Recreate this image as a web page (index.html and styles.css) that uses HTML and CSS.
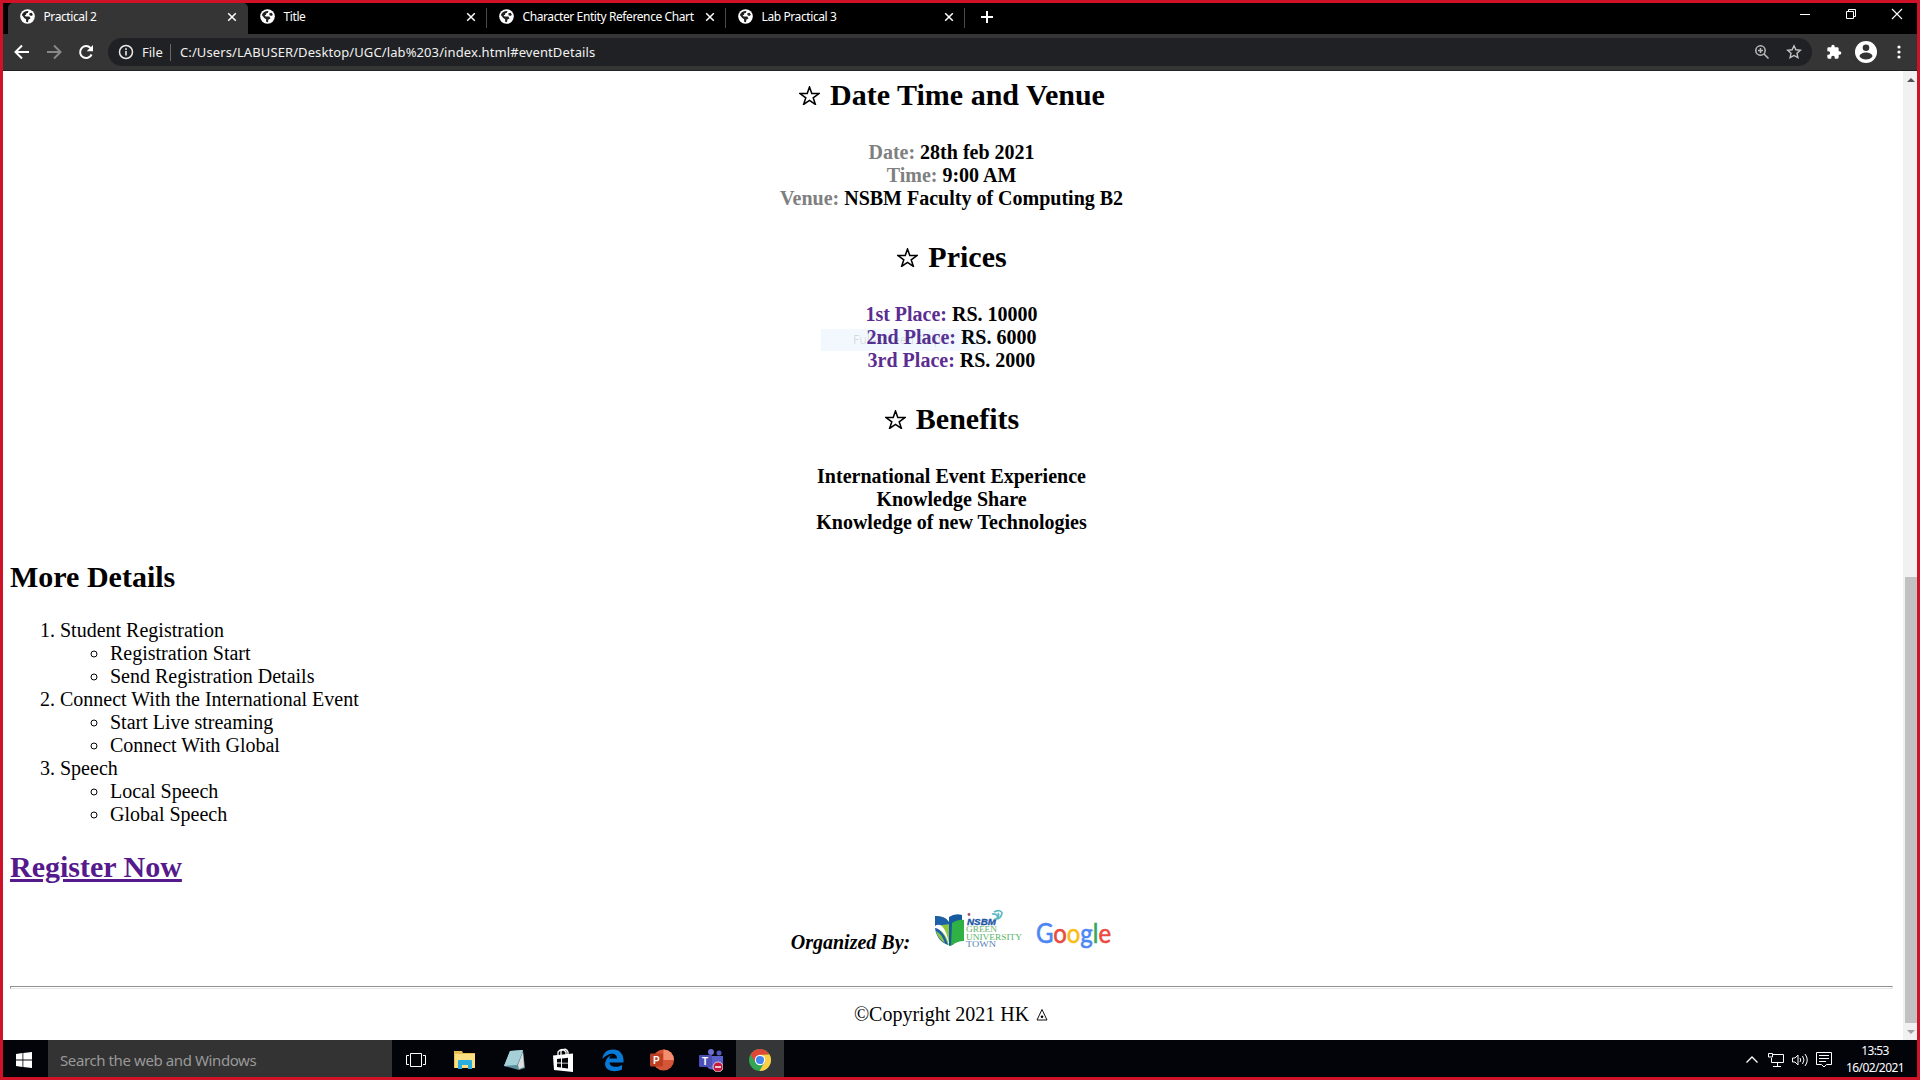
FILE: index.html
```html
<!DOCTYPE html>
<html lang="en">
<head>
<meta charset="utf-8">
<title>Practical 2</title>
<link rel="stylesheet" href="styles.css">
</head>
<body>
<svg width="0" height="0" class="defs" aria-hidden="true">
  <symbol id="globe" viewBox="0 0 16 16"><circle cx="8" cy="8" r="7.8" fill="#fff"/><path d="M2 6.500C3 3.500 6 1.800 9 2.200L8.500 4 6.500 4.800V6.500H5L6 8h4l1.200 2-2.200 1.300L8.500 14C7.500 14 7 13.800 6.500 13.500V11L4.500 9.500z" fill="#222"/><path d="M10 4.500l2.500-.5 1.300 2.500-2 1-1.800-1z" fill="#222"/></symbol>
  <symbol id="x" viewBox="0 0 10 10"><path d="M1.2 1.2l7.6 7.6M8.8 1.2L1.2 8.8" stroke="#fff" stroke-width="1.5"/></symbol>
</svg>
<div class="screen">
  <header class="tabs">
    <div class="tab active"><svg class="fav"><use href="#globe"/></svg><span>Practical 2</span><svg class="close"><use href="#x"/></svg></div>
    <div class="tab"><svg class="fav"><use href="#globe"/></svg><span>Title</span><svg class="close"><use href="#x"/></svg></div>
    <div class="tab"><svg class="fav"><use href="#globe"/></svg><span>Character Entity Reference Chart</span><svg class="close"><use href="#x"/></svg></div>
    <div class="tab"><svg class="fav"><use href="#globe"/></svg><span>Lab Practical 3</span><svg class="close"><use href="#x"/></svg></div>
    <svg class="plus" viewBox="0 0 14 14"><path d="M7 1v12M1 7h12" stroke="#fff" stroke-width="2"/></svg>
    <div class="window-buttons">
      <svg viewBox="0 0 12 12"><path d="M1 6.500h10" stroke="#fff"/></svg>
      <svg viewBox="0 0 12 12"><path d="M1.500 3.500h7v7h-7zM3.500 3.500v-2h7v7h-2" fill="none" stroke="#fff"/></svg>
      <svg viewBox="0 0 12 12"><path d="M1 1l10 10M11 1L1 11" stroke="#fff" stroke-width="1.1"/></svg>
    </div>
  </header>
  <div class="toolbar">
    <div class="nav">
      <svg viewBox="0 0 16 16"><path d="M15 8H2M8 1.5L1.5 8 8 14.5" fill="none" stroke="#fff" stroke-width="2"/></svg>
      <svg viewBox="0 0 16 16"><path d="M1 8h13M8 1.5L14.500 8 8 14.500" fill="none" stroke="#888" stroke-width="2"/></svg>
      <svg viewBox="0 0 16 16"><path d="M13.600 10.500A6 6 0 1 1 12.500 4" fill="none" stroke="#fff" stroke-width="2"/><path d="M15 1v6.300H8.700z" fill="#fff"/></svg>
    </div>
    <div class="address">
      <svg class="info" viewBox="0 0 16 16"><circle cx="8" cy="8" r="6.500" fill="none" stroke="#e8eaed" stroke-width="1.500"/><path d="M8 7v4.500M8 4.300v1.700" stroke="#e8eaed" stroke-width="1.600"/></svg>
      <span class="scheme">File</span><span class="url">C:/Users/LABUSER/Desktop/UGC/lab%203/index.html#eventDetails</span>
      <svg class="zoom" viewBox="0 0 16 16"><circle cx="6.500" cy="6.500" r="4.700" fill="none" stroke="#bbb" stroke-width="1.500"/><path d="M10 10l4.500 4.500M4 6.500h5M6.500 4v5" stroke="#bbb" stroke-width="1.500"/></svg>
      <svg class="star" viewBox="0 0 16 16"><path d="M8 1.800l1.900 4 4.400.5-3.300 3 .9 4.400L8 11.500l-3.900 2.200.9-4.400-3.300-3 4.400-.5z" fill="none" stroke="#c4c4c4" stroke-width="1.400"/></svg>
    </div>
    <svg class="puzzle" viewBox="0 0 24 24"><path fill="#fff" d="M20.500 11H19V7c0-1.100-.9-2-2-2h-4V3.500a2.500 2.500 0 0 0-5 0V5H4a2 2 0 0 0-2 2v3.800h1.500a2.700 2.700 0 0 1 0 5.400H2V20c0 1.100.9 2 2 2h3.800v-1.500a2.700 2.700 0 0 1 5.400 0V22H17a2 2 0 0 0 2-2v-4h1.500a2.500 2.500 0 0 0 0-5z"/></svg>
    <svg class="avatar" viewBox="0 0 22 22"><circle cx="11" cy="11" r="11" fill="#fff"/><circle cx="11" cy="6.700" r="3.300" fill="#333"/><path d="M4.500 15.200c1-5 12-5 13 0-2.600 4.300-10.400 4.300-13 0z" fill="#333"/></svg>
    <svg class="dots" viewBox="0 0 4 14"><circle cx="2" cy="2" r="1.600" fill="#fff"/><circle cx="2" cy="7" r="1.600" fill="#fff"/><circle cx="2" cy="12" r="1.600" fill="#fff"/></svg>
  </div>
  <div class="viewport">
    <main class="page">
      <section class="event">
        <h2><svg class="h-star" viewBox="0 0 22 20"><path d="M11 1l2.400 7H21l-6.100 4.400 2.300 7L11 15.100l-6.200 4.300 2.300-7L1 8h7.600z"/></svg>Date Time and Venue</h2>
        <p><i class="label">Date:</i> 28th feb 2021<br><i class="label">Time:</i> 9:00 AM<br><i class="label">Venue:</i> NSBM Faculty of Computing B2</p>
        <h2><svg class="h-star" viewBox="0 0 22 20"><path d="M11 1l2.400 7H21l-6.100 4.400 2.300 7L11 15.100l-6.200 4.300 2.300-7L1 8h7.600z"/></svg>Prices</h2>
        <p class="prices"><i class="place">1st Place:</i> RS. 10000<br><i class="place">2nd Place:</i> RS. 6000<br><i class="place">3rd Place:</i> RS. 2000<span class="ghost">Full-screen Snip</span></p>
        <h2><svg class="h-star" viewBox="0 0 22 20"><path d="M11 1l2.400 7H21l-6.100 4.400 2.300 7L11 15.100l-6.200 4.300 2.300-7L1 8h7.600z"/></svg>Benefits</h2>
        <p class="benefits">International Event Experience<br>Knowledge Share<br>Knowledge of new Technologies</p>
      </section>
      <h2 class="more">More Details</h2>
      <ol>
        <li>Student Registration<ul><li>Registration Start</li><li>Send Registration Details</li></ul></li>
        <li>Connect With the International Event<ul><li>Start Live streaming</li><li>Connect With Global</li></ul></li>
        <li>Speech<ul><li>Local Speech</li><li>Global Speech</li></ul></li>
      </ol>
      <h2 class="register"><a href="#register">Register Now</a></h2>
      <div class="organizers">
        <b>Organized By:</b>
        <svg class="nsbm" viewBox="0 0 88 40">
          <path d="M0 7c8 0 13 3 16 9v21C7 34 1 26 0 7z" fill="#8dc63f"/>
          <path d="M0 7c8 0 12 2 15 8L0 17z" fill="#1d60a8"/>
          <path d="M0 17c5-4 11 1 14 17v2C11 25 6 20 0 20z" fill="#fff"/>
          <path d="M0 19c6 1 10 7 13 17C5 33 1 27 0 19z" fill="#1d60a8"/>
          <path d="M1 22c4 2 7 6 9 12-5-3-8-7-9-12z" fill="#8dc63f"/>
          <path d="M14 8q6-4 13-2v7l-8 3v19l-5 2z" fill="#165a9f"/>
          <path d="M17 14q7-4 12-3v21q-7 0-13 5z" fill="#2fb146"/>
          <text x="32" y="15.500" textLength="29" lengthAdjust="spacingAndGlyphs" font-size="9" font-weight="700" font-style="italic" fill="#1c56a4" stroke="#1c56a4" stroke-width=".3">NSBM</text>
          <g font-family="Liberation Serif, serif" font-size="9"><text x="31" y="23" textLength="31" lengthAdjust="spacingAndGlyphs" fill="#68b36c">GREEN</text><text x="31" y="30.500" textLength="56" lengthAdjust="spacingAndGlyphs" fill="#54b466">UNIVERSITY</text><text x="31" y="38" textLength="30" lengthAdjust="spacingAndGlyphs" fill="#5582b4">TOWN</text></g>
          <circle cx="34" cy="5.500" r="1.400" fill="#a2506a"/><path d="M59 3q7-3 8 1-1 6-6 6 4-3 2-6M57 5q5-1 6 4" fill="none" stroke="#5fb9c2" stroke-width="1.700"/>
        </svg>
        <svg class="google" viewBox="0 0 76 32"><text x="0" y="20.500" textLength="75" lengthAdjust="spacingAndGlyphs"><tspan fill="#4b87f3" stroke="#4b87f3">G</tspan><tspan fill="#ea4a3d" stroke="#ea4a3d">o</tspan><tspan fill="#f8bd16" stroke="#f8bd16">o</tspan><tspan fill="#4b87f3" stroke="#4b87f3">g</tspan><tspan fill="#38a757" stroke="#38a757">l</tspan><tspan fill="#ea4a3d" stroke="#ea4a3d">e</tspan></text></svg>
      </div>
      <hr>
      <footer>©Copyright 2021 HK <svg class="tri" viewBox="0 0 12 13"><path d="M6 1.500L11 12H1z" fill="none" stroke="#111"/><circle cx="6" cy="8.700" r="1.300"/></svg></footer>
    </main>
    <aside class="scrollbar"><i class="up"></i><i class="thumb"></i><i class="down"></i></aside>
  </div>
  <nav class="taskbar">
    <div class="start"><svg viewBox="0 0 16 16"><path fill="#fff" d="M0 2l6.500-.9v6.500H0zM7.300 1L16 0v7.600H7.300zM0 8.400h6.500v6.500L0 14zM7.300 8.400H16V16l-8.700-1z"/></svg></div>
    <div class="search">Search the web and Windows</div>
    <div class="apps">
      <div><svg viewBox="0 0 24 24"><path d="M6.500 5.500h11v13h-11zM5 7.500H2.500v9H5M19 7.500h2.500v9H19" fill="none" stroke="#fff"/></svg></div>
      <div><svg viewBox="0 0 24 24"><path d="M1 3h8l1 2h12v15H1z" fill="#e9bd54"/><path d="M2 6h20v14H2z" fill="#fbdf83"/><path d="M5 21v-8q0-1 1-1h12q1 0 1 1v8h-4v-4H9v4z" fill="#28afe0"/></svg></div>
      <div><svg viewBox="0 0 24 24"><path d="M8 3l13-1-3 18-16-2z" fill="#83b9c5"/><path d="M8 3l13-1-5 15-14 1z" fill="#a5d0d8"/><path d="M21 3l2 17-6 2-15-4 13-1z" fill="#5c8d9a"/><path d="M21 4l1 15-5 2-1-4z" fill="#ddd"/></svg></div>
      <div><svg viewBox="0 0 24 24"><path d="M7 8V4q4-5 8 0v3M10 7V3q5-4 7 1v3" fill="none" stroke="#fff" stroke-width="1.300"/><path d="M2 7.500l20-2V24L3 22z" fill="#fff"/><path d="M6 11l4-.4v4H6zM11 10.500l6-.7v4.900h-6zM6 15.500h4v4L6 19zM11 15.500h6v5l-6-.7z" fill="#030409"/></svg></div>
      <div><svg viewBox="0 0 24 24"><path fill="#0879d5" d="M1.500 11C2 4.500 6.500 1.500 12 1.500c7 0 10.500 5 10.500 10.500v2.500h-14c.3 5 8 5.500 12.500 2.500v4.500C11 26 2 21 4.500 13.500 5.500 10 8 8 11 7 8.500 8.500 8.500 9.500 8.300 10.500H16c0-7-9.500-6-14.500.5z"/></svg></div>
      <div><svg viewBox="0 0 24 24"><circle cx="13.500" cy="12" r="10.500" fill="#d45538"/><path d="M13.500 1.500A10.500 10.500 0 0 1 24 12H13.500z" fill="#f48e6e"/><rect y="5.500" width="13" height="13" rx="1" fill="#bd3e20"/><text x="3" y="15.500" font-size="10" font-weight="700" fill="#fff">P</text></svg></div>
      <div><svg viewBox="0 0 24 24"><circle cx="12" cy="4" r="3" fill="#6b70cf"/><circle cx="20" cy="5" r="2.500" fill="#5359c0"/><path d="M6 8h18v8q-2 6-8 5-6 2-9-4z" fill="#5b60ca"/><rect y="7" width="13" height="12" rx="1" fill="#4c50b6"/><text x="3" y="16.500" font-size="10" font-weight="700" fill="#fff">T</text><circle cx="19" cy="19" r="5" fill="#c31941" stroke="#eee" stroke-width=".8"/><path d="M16 19h6" stroke="#fff" stroke-width="1.500"/></svg></div>
      <div class="current"><svg viewBox="0 0 24 24"><circle cx="12" cy="12" r="11" fill="#32a653"/><path d="M2.500 6.500A11 11 0 0 1 21.500 6.500L12 7 7.500 14.500z" fill="#df4738"/><path d="M21.500 6.500A11 11 0 0 1 11.500 23L16.500 14.500 13 6.800z" fill="#fccf45"/><circle cx="12" cy="12" r="5.200" fill="#fff"/><circle cx="12" cy="12" r="4.100" fill="#4384ed"/></svg></div>
    </div>
    <div class="tray">
      <svg viewBox="0 0 16 16"><path d="M2.500 10.500L8 5l5.500 5.500" fill="none" stroke="#fff" stroke-width="1.300"/></svg>
      <svg viewBox="0 0 16 16"><path d="M5 2.500h10.500v8H3.500V6M9.500 10.500v4M5 14.500h8M.5 1.500h4v3.500h-4z" fill="none" stroke="#fff"/></svg>
      <svg viewBox="0 0 16 16"><path d="M.5 6h2.500l3-3v10l-3-3H.5zM8 6q1.500 2 0 4M10.500 4q3 4 0 8M13 2q4.500 6 0 12" fill="none" stroke="#fff"/></svg>
      <svg viewBox="0 0 16 16"><path d="M.5.5h15v12h-5L8 15l-2.500-2.500h-5zM3 3.500h10M3 6.500h10M3 9.500h7" fill="none" stroke="#fff"/></svg>
      <div class="clock"><span>13:53</span><span>16/02/2021</span></div>
    </div>
  </nav>
</div>
</body>
</html>
```
FILE: styles.css
```css
* { box-sizing: border-box; }
body { margin: 0; overflow: hidden; font-family: "Noto Sans", "Open Sans", sans-serif; }
.defs { display: block; position: absolute; }
svg { display: block; flex: none; }
.screen { width: 1920px; height: 1080px; border: 3px solid #cf1228; display: flex; flex-direction: column; background: #fff; }

.tabs { height: 31px; background: #000; display: flex; align-items: flex-start; padding-left: 5px; color: #fff; font-size: 12px; }
.tab { width: 239px; height: 31px; padding: 0 11px 4px 12px; display: flex; align-items: center; gap: 8.5px; position: relative; white-space: nowrap; letter-spacing: -0.4px; }
.tab.active { width: 240px; background: #353535; border-radius: 5px 5px 0 0; }
.tab:not(.active)::after { content: ""; position: absolute; right: 0; top: 5px; width: 1px; height: 20px; background: #4a4a4a; }
.fav { width: 15px; height: 15px; }
.close { width: 10px; height: 10px; margin-left: auto; }
.plus { width: 14px; height: 14px; margin: 7px 0 0 15px; }
.window-buttons { margin: 5px 14px 0 auto; display: flex; gap: 34px; }
.window-buttons svg { width: 12px; height: 12px; }

.toolbar { height: 37px; background: #353535; border-bottom: 1px solid #202124; display: flex; align-items: center; }
.nav { width: 105px; padding-left: 11px; display: flex; gap: 16px; }
.nav svg { width: 16px; height: 16px; }
.address { width: 1704px; height: 28px; background: #202124; border-radius: 14px; display: flex; align-items: center; padding: 0 10px; color: #f1f1f1; font-size: 13px; white-space: nowrap; }
.info { width: 16px; height: 16px; margin-right: 8px; }
.scheme { width: 29px; border-right: 1px solid #686868; line-height: 17px; }
.url { padding-left: 9px; letter-spacing: 0.1px; }
.zoom { width: 16px; height: 16px; margin-left: auto; margin-right: 16px; }
.star { width: 16px; height: 16px; }
.puzzle { width: 16px; height: 16px; margin-left: 14px; }
.avatar { width: 22px; height: 22px; margin-left: 13px; }
.dots { width: 4px; height: 14px; margin-left: 20px; }

.viewport { height: 969px; display: flex; }
.page { width: 1900px; padding: 7px 10px 0 7px; font: 20px/23px "Liberation Serif", serif; color: #000; overflow: hidden; }
.page h2 { font-size: 30px; line-height: 34px; height: 34px; margin: 0; }
.event { text-align: center; font-weight: bold; height: 482px; }
.event h2 { display: flex; justify-content: center; align-items: center; gap: 10px; padding-left: 1px; }
.h-star { width: 21px; height: 19px; fill: none; stroke: #000; stroke-width: 1.6; }
.event p { margin: 29px 0 30px; height: 69px; }
.label, .place { font-style: normal; }
.label { color: #808080; }
.place { color: #5c2d91; }
.prices { position: relative; }
.ghost { position: absolute; left: 811px; top: 26px; width: 174px; height: 22px; padding-left: 32px; background: linear-gradient(90deg, rgba(0,120,215,.05), rgba(0,120,215,.05) 85%, rgba(0,120,215,.01)); color: rgba(0,0,0,.12); font: 12px/22px "Noto Sans", sans-serif; text-align: left; }
ol { margin: 25px 0 24px; padding-left: 50px; height: 207px; }
ul { margin: 0; padding-left: 50px; }
.register a { color: #551a8b; }
.organizers { height: 102px; display: flex; justify-content: center; align-items: flex-start; padding-top: 25px; }
.organizers b { font-style: italic; margin: 22px 25px 0 0; }
.nsbm { width: 88px; height: 40px; margin-right: 13px; font-family: "Liberation Sans", sans-serif; overflow: visible; }
.google { width: 76px; height: 32px; margin-top: 13px; font: 26px Lato, sans-serif; stroke-width: 0.6; overflow: visible; }
hr { margin: 0; height: 3px; border: 1px solid; border-color: #8f8f8f #e6e6e6 #e6e6e6 #8f8f8f; }
footer { margin-top: 14px; padding-right: 1px; display: flex; justify-content: center; align-items: center; gap: 7px; }
.tri { width: 12px; height: 13px; }
.scrollbar { width: 14px; background: #f1f1f1; display: flex; flex-direction: column; align-items: center; padding: 7px 0 6px 2px; }
.up, .down { border: 4px solid transparent; width: 0; height: 0; }
.up { border-top-width: 0; border-bottom-color: #505050; }
.down { border-bottom-width: 0; border-top-color: #a0a0a0; margin-top: auto; }
.thumb { width: 12px; height: 446px; background: #c1c1c1; margin-top: 495px; }

.taskbar { height: 37px; background: #030409; display: flex; color: #fff; }
.start { width: 45px; display: flex; align-items: center; padding: 3px 0 0 13px; }
.start svg { width: 16px; height: 16px; }
.search { width: 344px; background: #333; color: #999; font-size: 15px; line-height: 41px; padding-left: 12px; white-space: nowrap; letter-spacing: -0.4px; }
.apps { display: flex; gap: 1.15px; }
.apps div { width: 48px; display: flex; justify-content: center; align-items: center; padding-top: 2px; }
.apps .current { background: #343638; }
.apps svg { width: 24px; height: 24px; font-family: "Liberation Sans", sans-serif; }
.tray { margin-left: auto; display: flex; align-items: center; gap: 8px; padding-right: 11px; }
.tray svg { width: 16px; height: 16px; margin-top: 3px; }
.clock { width: 62px; margin-left: 4px; font-size: 12px; line-height: 17px; letter-spacing: -0.6px; white-space: nowrap; display: flex; flex-direction: column; align-items: center; }
```
